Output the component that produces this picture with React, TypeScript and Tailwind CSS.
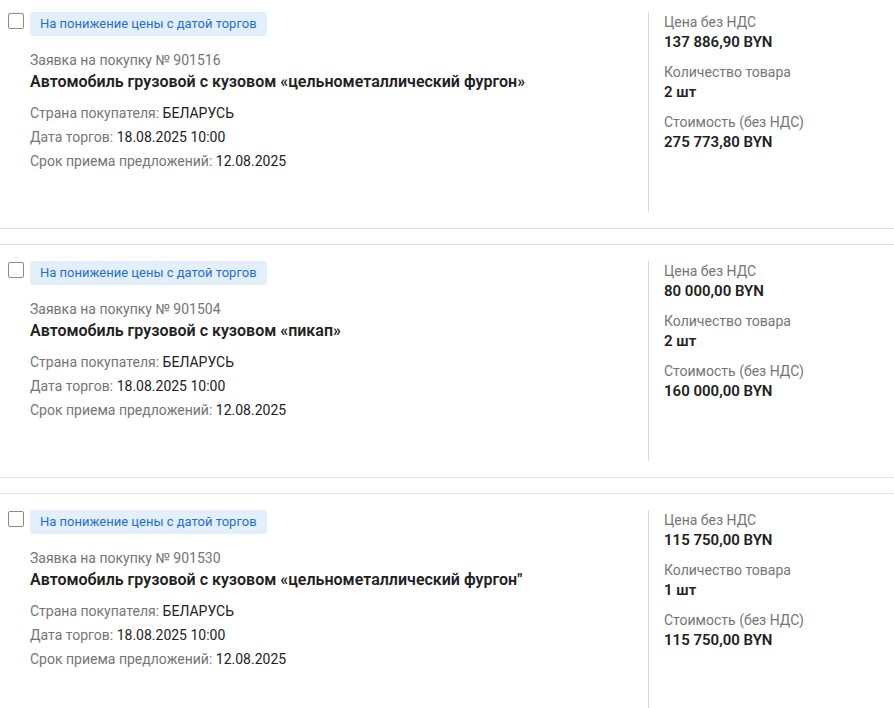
import React from "react";

interface Lot {
  number: string;
  title: string;
  price: string;
  qty: string;
  total: string;
}

const lots: Lot[] = [
  {
    number: "901516",
    title: "Автомобиль грузовой с кузовом «цельнометаллический фургон»",
    price: "137 886,90 BYN",
    qty: "2 шт",
    total: "275 773,80 BYN",
  },
  {
    number: "901504",
    title: "Автомобиль грузовой с кузовом «пикап»",
    price: "80 000,00 BYN",
    qty: "2 шт",
    total: "160 000,00 BYN",
  },
  {
    number: "901530",
    title: "Автомобиль грузовой с кузовом «цельнометаллический фургон\"",
    price: "115 750,00 BYN",
    qty: "1 шт",
    total: "115 750,00 BYN",
  },
];

const Row = ({ label, value }: { label: string; value: string }) => (
  <div className="leading-6 text-sm">
    <span className="text-[#757575]">{label} </span>
    <span className="text-[#212121]">{value}</span>
  </div>
);

const Field = ({ label, value }: { label: string; value: string }) => (
  <div className="mb-2.5">
    <div className="text-sm leading-5 text-[#757575]">{label}</div>
    <div className="text-[15px] leading-5 font-semibold text-[#212121]">{value}</div>
  </div>
);

const LotCard = ({ lot }: { lot: Lot }) => (
  <div className="flex border-y border-[#e0e0e0] py-4 pl-2">
    {/* левая часть */}
    <div className="flex flex-1 gap-1.5">
      <div className="mt-px h-4 w-4 shrink-0 rounded-[2px] border border-[#8a8a8a] bg-white" />
      <div className="flex flex-col">
        <div className="self-start h-6 rounded-[3px] bg-[#e3f0fc] px-2.5 text-[13px] leading-6 text-[#1f6fd1]">
          На понижение цены с датой торгов
        </div>
        <div className="mt-[14px] text-sm leading-5 text-[#757575]">
          Заявка на покупку № {lot.number}
        </div>
        <div className="text-base leading-6 font-semibold text-[#212121]">{lot.title}</div>
        <div className="mt-[7px]">
          <Row label="Страна покупателя:" value="БЕЛАРУСЬ" />
          <Row label="Дата торгов:" value="18.08.2025 10:00" />
          <Row label="Срок приема предложений:" value="12.08.2025" />
        </div>
      </div>
    </div>
    {/* правая часть */}
    <div className="h-[200px] w-[246px] shrink-0 border-l border-[#d9d9d9] pl-[15px]">
      <Field label="Цена без НДС" value={lot.price} />
      <Field label="Количество товара" value={lot.qty} />
      <Field label="Стоимость (без НДС)" value={lot.total} />
    </div>
  </div>
);

export default function App() {
  return (
    <div className="h-[708px] overflow-hidden bg-white font-['Roboto',sans-serif]">
      <div className="mt-[-5px] flex flex-col gap-[15px]">
        {lots.map((lot) => (
          <LotCard key={lot.number} lot={lot} />
        ))}
      </div>
    </div>
  );
}
